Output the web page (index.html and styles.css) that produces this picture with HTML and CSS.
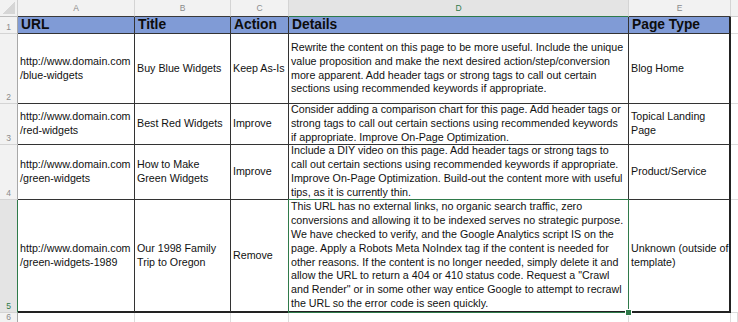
FILE: index.html
```html
<!DOCTYPE html>
<html>
<head>
<meta charset="utf-8">
<link rel="stylesheet" href="styles.css">
</head>
<body>
<div class="sheet">
  <div class="corner"><span class="tri"></span></div>
  <div class="ch">A</div>
  <div class="ch">B</div>
  <div class="ch">C</div>
  <div class="ch ch-sel">D</div>
  <div class="ch">E</div>
  <div class="ch ch-f"></div>

  <div class="rh">1</div>
  <div class="c hd">URL</div>
  <div class="c hd">Title</div>
  <div class="c hd">Action</div>
  <div class="c hd">Details</div>
  <div class="c hd last">Page Type</div>
  <div class="f"></div>

  <div class="rh">2</div>
  <div class="c">http://www.domain.com<br>/blue-widgets</div>
  <div class="c">Buy Blue Widgets</div>
  <div class="c">Keep As-Is</div>
  <div class="c">Rewrite the content on this page to be more useful. Include the unique<br>value proposition and make the next desired action/step/conversion<br>more apparent. Add header tags or strong tags to call out certain<br>sections using recommended keywords if appropriate.</div>
  <div class="c last">Blog Home</div>
  <div class="f"></div>

  <div class="rh">3</div>
  <div class="c">http://www.domain.com<br>/red-widgets</div>
  <div class="c">Best Red Widgets</div>
  <div class="c">Improve</div>
  <div class="c">Consider adding a comparison chart for this page. Add header tags or<br>strong tags to call out certain sections using recommended keywords<br>if appropriate. Improve On-Page Optimization.</div>
  <div class="c last">Topical Landing<br>Page</div>
  <div class="f"></div>

  <div class="rh">4</div>
  <div class="c">http://www.domain.com<br>/green-widgets</div>
  <div class="c">How to Make<br>Green Widgets</div>
  <div class="c">Improve</div>
  <div class="c">Include a DIY video on this page. Add header tags or strong tags to<br>call out certain sections using recommended keywords if appropriate.<br>Improve On-Page Optimization. Build-out the content more with useful<br>tips, as it is currently thin.</div>
  <div class="c last">Product/Service</div>
  <div class="f"></div>

  <div class="rh rh-sel">5</div>
  <div class="c bot">http://www.domain.com<br>/green-widgets-1989</div>
  <div class="c bot">Our 1998 Family<br>Trip to Oregon</div>
  <div class="c bot">Remove</div>
  <div class="c bot selected">This URL has no external links, no organic search traffic, zero<br>conversions and allowing it to be indexed serves no strategic purpose.<br>We have checked to verify, and the Google Analytics script IS on the<br>page. Apply a Robots Meta NoIndex tag if the content is needed for<br>other reasons. If the content is no longer needed, simply delete it and<br>allow the URL to return a 404 or 410 status code. Request a "Crawl<br>and Render" or in some other way entice Google to attempt to recrawl<br>the URL so the error code is seen quickly.<span class="handle"></span></div>
  <div class="c bot last">Unknown (outside of<br>template)</div>
  <div class="f"></div>

  <div class="rh rh-6">6</div>
  <div class="e"></div>
  <div class="e"></div>
  <div class="e"></div>
  <div class="e"></div>
  <div class="e"></div>
  <div class="e"></div>
</div>
</body>
</html>
```

FILE: styles.css
```css
html, body {
  margin: 0;
  padding: 0;
  background: #ffffff;
  overflow: hidden;
}

.sheet {
  width: 738px;
  display: grid;
  grid-template-columns: 18px 117px 96px 58px 340px 102px 1fr;
  grid-template-rows: 17px 17px 70px 41px 55px 113px 9px;
  font-family: "Liberation Sans", Arial, Helvetica, sans-serif;
  color: #111111;
}

.sheet > div {
  box-sizing: border-box;
}

.corner {
  background: #f2f2f2;
  border-right: 1px solid #cfcfcf;
  border-bottom: 1px solid #bdbdbd;
  display: flex;
  align-items: flex-end;
  justify-content: flex-end;
  padding: 0 2px 2px 0;
}

.tri {
  width: 12px;
  height: 12px;
  background: linear-gradient(to bottom right, transparent 50%, #d6d6d6 50%);
}

.ch {
  background: #f2f2f2;
  border-right: 1px solid #d4d4d4;
  border-bottom: 1px solid #3a3a3a;
  font-size: 8.5px;
  color: #8a8a8a;
  display: flex;
  align-items: center;
  justify-content: center;
}

.ch-sel {
  background: #e4e4e4;
  color: #2f7a4a;
  border-bottom: 1px solid #2f7a4a;
}

.ch-f {
  border-bottom: 1px solid #cfcfcf;
  border-right: none;
}

.rh {
  background: #f2f2f2;
  border-right: 1px solid #a8a8a8;
  border-bottom: 1px solid #d4d4d4;
  font-size: 8.5px;
  color: #8a8a8a;
  display: flex;
  align-items: flex-end;
  justify-content: center;
  line-height: 10px;
  padding-bottom: 1px;
}

.rh-sel {
  background: #e4e4e4;
  color: #2f7a4a;
  border-right: 1px solid #2f7a4a;
}

.rh-6 {
  line-height: 9px;
  padding-bottom: 0;
  border-bottom: none;
}

.c {
  border-right: 1px solid #333333;
  border-bottom: 1px solid #333333;
  font-size: 10.7px;
  line-height: 13.8px;
  white-space: nowrap;
  display: flex;
  align-items: center;
  padding-left: 2px;
  position: relative;
}

.hd {
  background: #809bd6;
  font-size: 13.8px;
  font-weight: bold;
  color: #0d0d0d;
  padding-left: 3px;
  line-height: 16px;
}

.last {
  border-right: 2px solid #222222;
}

.bot {
  border-bottom: 2px solid #222222;
}

.selected::after {
  content: "";
  position: absolute;
  left: -1px;
  top: -1px;
  right: -1px;
  bottom: -2px;
  border: 1.5px solid #2f7a4a;
  pointer-events: none;
}

.handle {
  position: absolute;
  right: -4px;
  bottom: -5px;
  width: 5px;
  height: 5px;
  background: #2f7a4a;
  border: 1px solid #ffffff;
  z-index: 2;
}

.f {
  border-bottom: 1px solid #dcdcdc;
}

.e {
  border-right: 1px solid #dcdcdc;
}
```
